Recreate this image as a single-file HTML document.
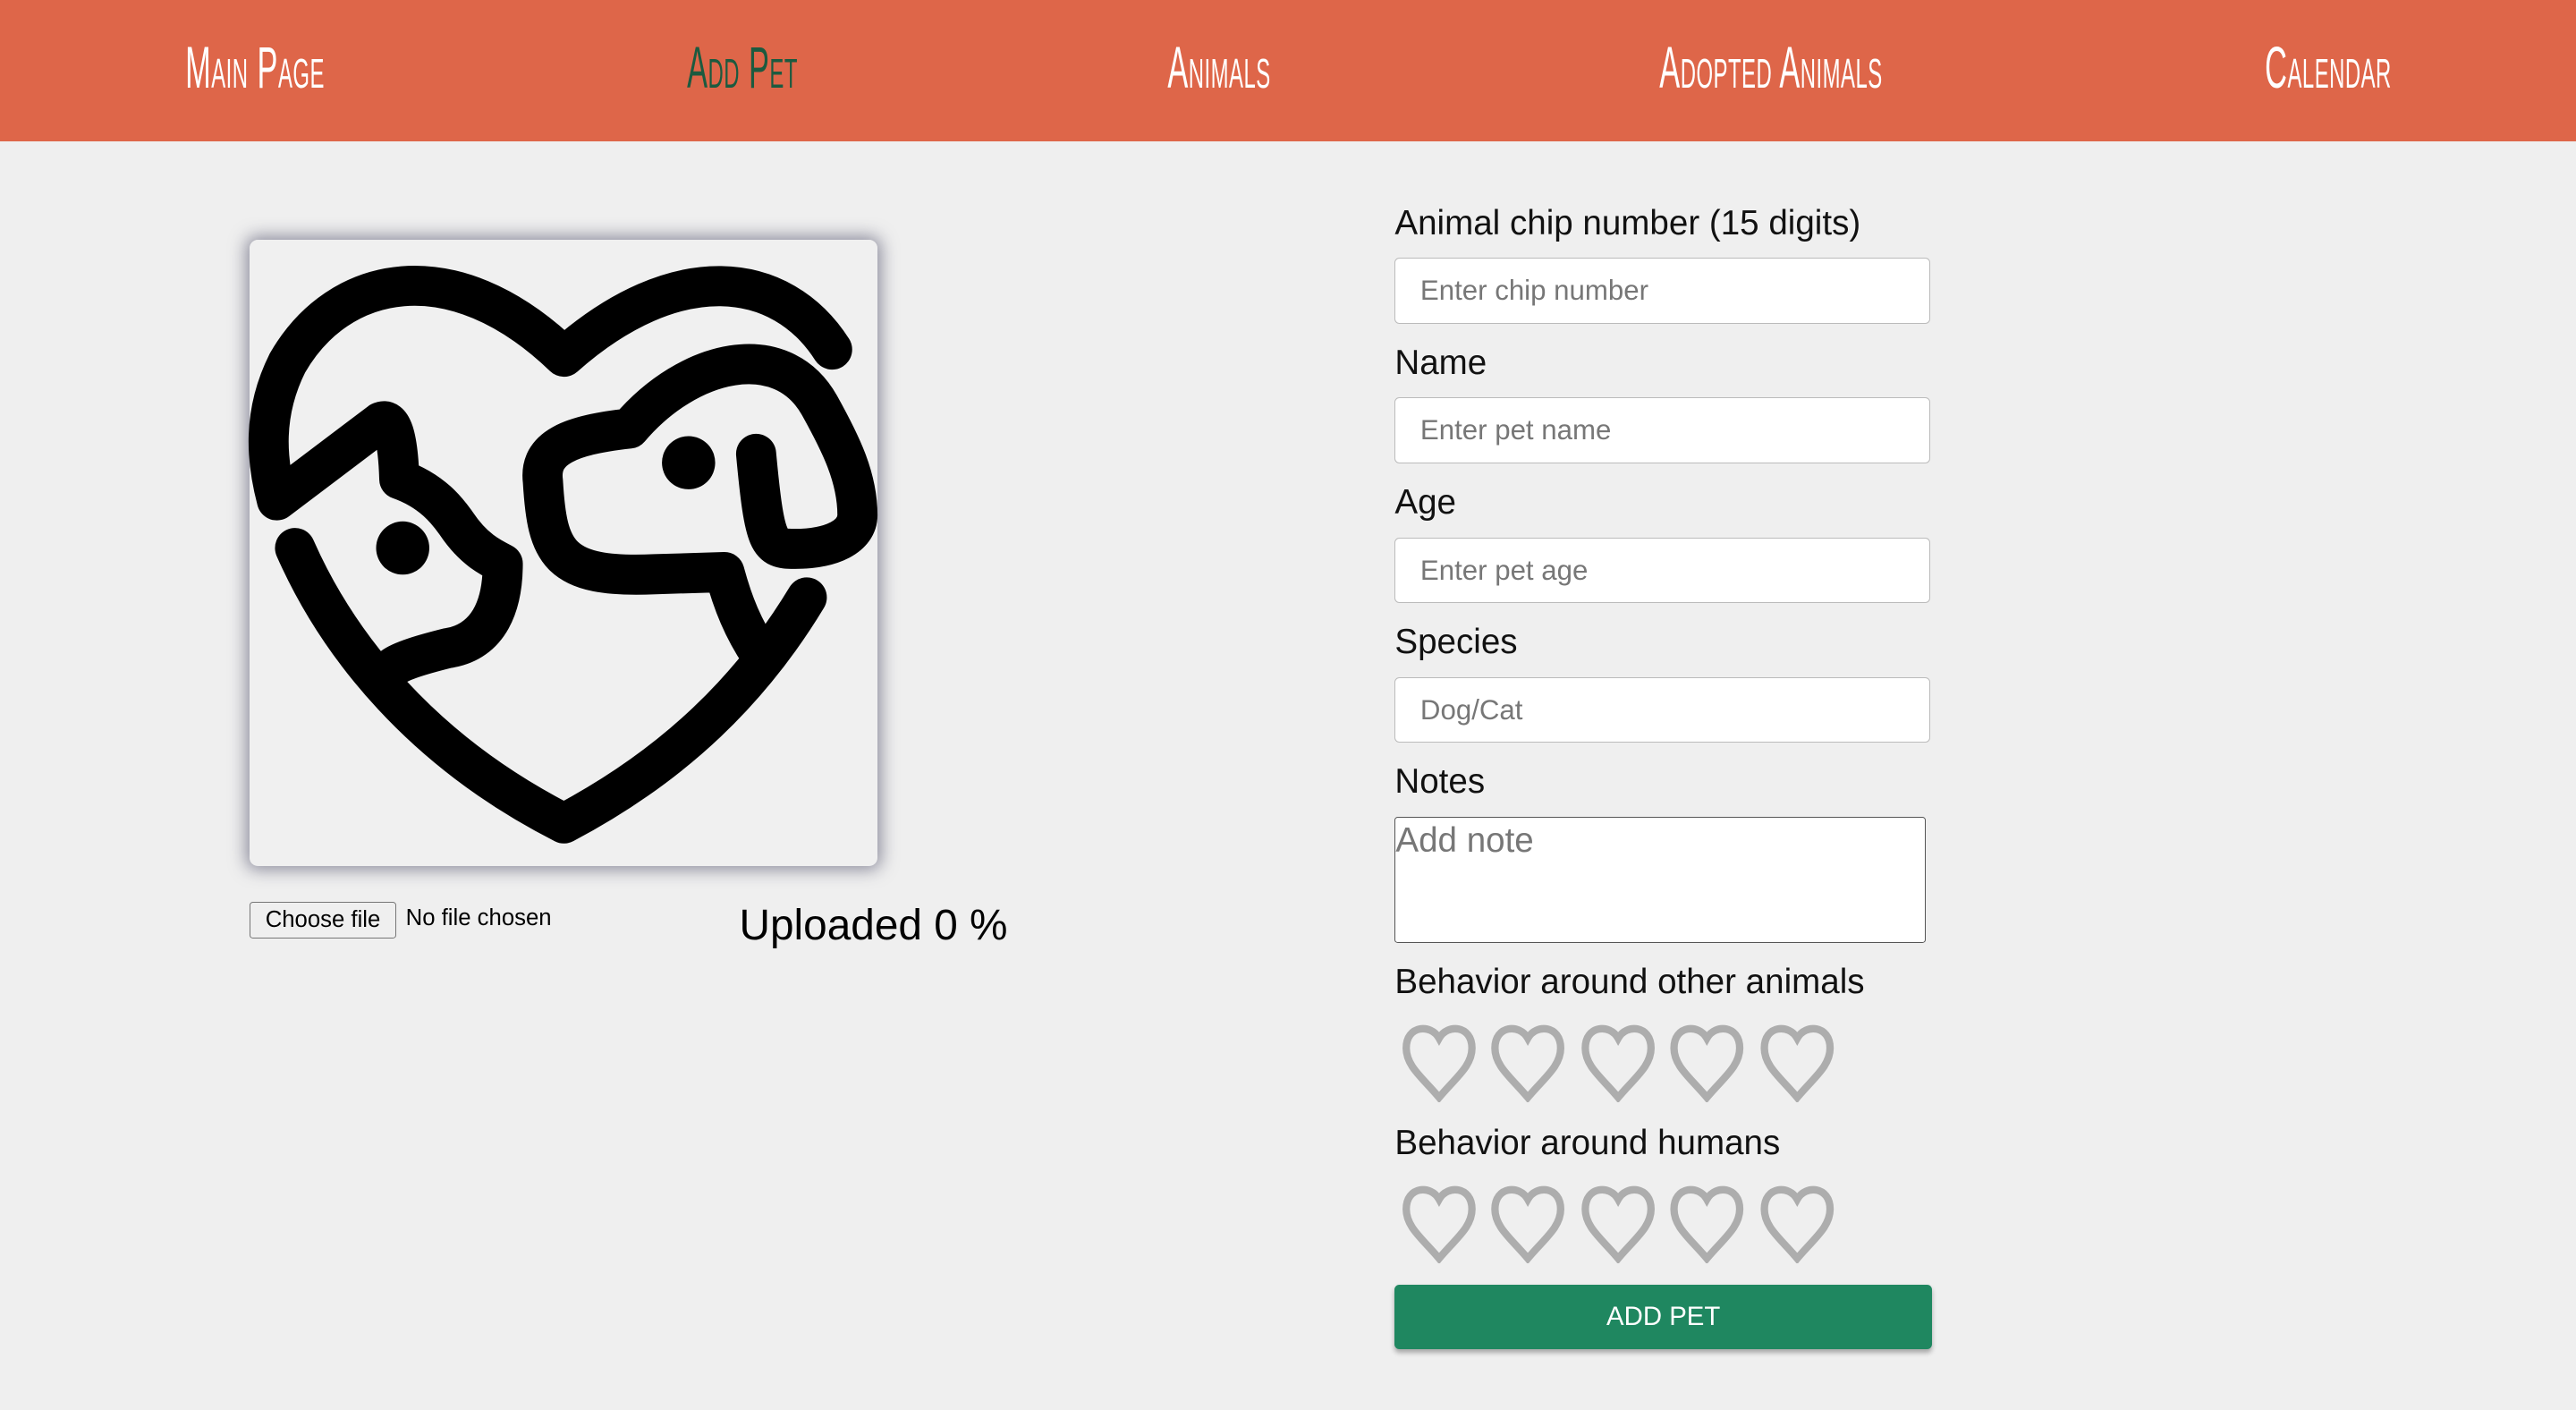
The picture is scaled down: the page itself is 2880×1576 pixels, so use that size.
<!DOCTYPE html>
<html><head><meta charset="utf-8"><style>
html,body{margin:0;padding:0;background:#efefef;}
body{width:1568px;height:858px;zoom:1.83673;position:relative;overflow:hidden;font-family:"Liberation Sans",sans-serif;}
.nav{position:absolute;left:0;top:0;width:1568px;height:86px;background:#de6649;}
.nav span{position:absolute;top:22px;font-family:"Liberation Sans",sans-serif;font-size:36px;line-height:40px;color:#fff;font-variant:small-caps;transform:translateX(-50%) scaleX(0.52);white-space:nowrap;letter-spacing:0.5px;}
.box{position:absolute;left:152px;top:146px;width:382px;height:381px;background:#f0f0f0;border-radius:5px;box-shadow:0 0 10px 2px rgba(60,60,90,0.55);}
.lbl{position:absolute;left:849px;font-size:21px;color:#111;}
.inp{position:absolute;left:849px;width:325px;height:39px;background:#fff;border:1px solid #bbb;border-radius:3px;font-size:17px;color:#777;line-height:39px;text-indent:15px;}
.hearts{position:absolute;left:851px;}
.btn{position:absolute;left:849px;top:782px;width:327px;height:39px;background:#1f8760;border-radius:3px;color:#fff;font-size:16px;text-align:center;line-height:39px;box-shadow:0 2px 3px rgba(0,0,0,0.3);}
</style></head><body>
<div class="nav">
<span style="left:155px">Main Page</span>
<span style="left:452px;color:#1c5a3f">Add Pet</span>
<span style="left:742px">Animals</span>
<span style="left:1078px">Adopted Animals</span>
<span style="left:1417px">Calendar</span>
</div>
<div class="box"></div>
<svg style="position:absolute;left:141.6px;top:136.1px" width="403" height="403" viewBox="0 0 1568 1568">
<g fill="none" stroke="#000" stroke-width="95" stroke-linecap="round" stroke-linejoin="round">
<path d="M1420,298 C1300,110 1050,80 785,315 C520,60 250,120 130,330 C70,450 80,560 105,655 L350,470 Q390,450 395,605 C480,635 515,690 530,710 C570,770 610,790 640,805 C640,900 610,990 510,1005 C450,1020 400,1035 380,1050"/>
<path d="M148,768 C250,1000 450,1250 785,1420 C1050,1280 1230,1100 1360,885"/>
<path d="M1240,545 C1260,760 1270,770 1330,770 C1420,770 1480,740 1480,690 C1480,600 1440,520 1390,430 C1300,270 1080,320 940,485 C800,500 725,530 735,610 C745,780 770,840 1000,830 L1165,825 C1185,900 1210,960 1250,1020"/>
</g>
<circle cx="403" cy="768" r="63"/><circle cx="1080" cy="566" r="63"/>
</svg>
<div style="position:absolute;left:152px;top:549px;width:88px;height:21px;border:1px solid #767676;border-radius:2px;background:#efefef;font-size:14px;text-align:center;line-height:21px;color:#000">Choose file</div>
<div style="position:absolute;left:247px;top:551px;font-size:14px;color:#000">No file chosen</div>
<div style="position:absolute;left:450px;top:548px;font-size:26px;color:#000">Uploaded 0 %</div>

<div class="lbl" style="top:124px">Animal chip number (15 digits)</div>
<div class="inp" style="top:157px">Enter chip number</div>
<div class="lbl" style="top:209px">Name</div>
<div class="inp" style="top:242px">Enter pet name</div>
<div class="lbl" style="top:294px">Age</div>
<div class="inp" style="top:327px">Enter pet age</div>
<div class="lbl" style="top:379px">Species</div>
<div class="inp" style="top:412px">Dog/Cat</div>
<div class="lbl" style="top:464px">Notes</div>
<div style="position:absolute;left:849px;top:497px;width:322px;height:76px;background:#fff;border:1px solid #555;border-radius:2px;font-size:21px;color:#777;line-height:28px;">Add note</div>
<div class="lbl" style="top:586px">Behavior around other animals</div>
<svg class="hearts" style="top:623px" width="270" height="48" viewBox="0 0 270 48">
<defs><path id="h" d="M23,9 C18,0 3,1 3,15 C3,26 13,33 23,45 C33,33 43,26 43,15 C43,1 28,0 23,9 Z" fill="none" stroke="#adadad" stroke-width="4.5"/></defs>
<use href="#h" x="2"/><use href="#h" x="56"/><use href="#h" x="111"/><use href="#h" x="165"/><use href="#h" x="220"/>
</svg>
<div class="lbl" style="top:684px">Behavior around humans</div>
<svg class="hearts" style="top:721px" width="270" height="48" viewBox="0 0 270 48">
<use href="#h" x="2"/><use href="#h" x="56"/><use href="#h" x="111"/><use href="#h" x="165"/><use href="#h" x="220"/>
</svg>
<div class="btn">ADD PET</div>
</body></html>
